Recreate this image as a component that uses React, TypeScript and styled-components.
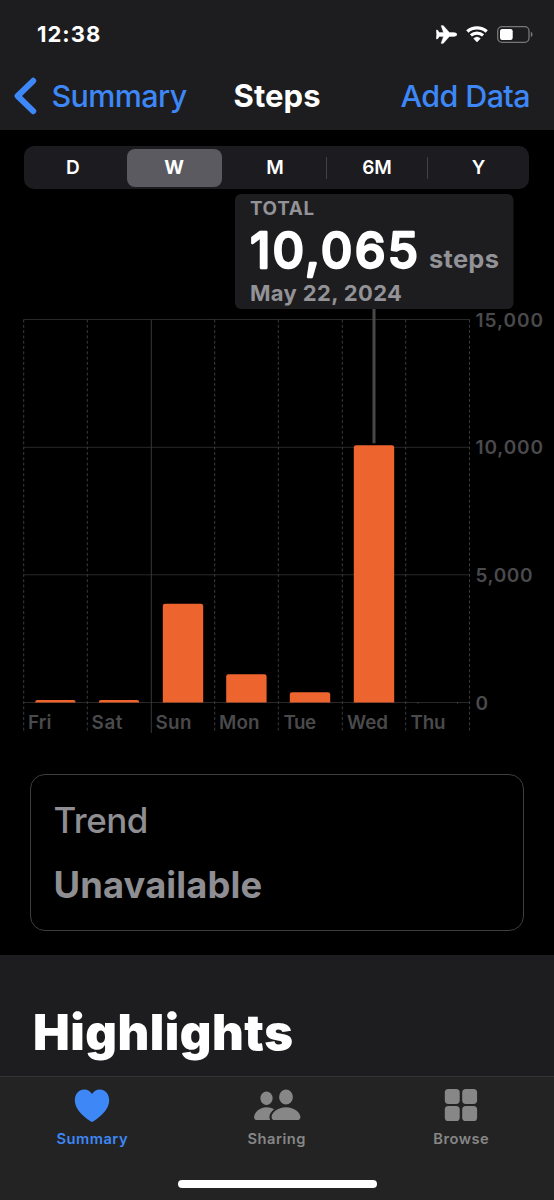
import React from "react";
import styled, { createGlobalStyle } from "styled-components";

const GlobalStyle = createGlobalStyle`
  * { box-sizing: border-box; }
  html, body { margin: 0; padding: 0; background: #000; }
  body { font-family: Inter, "Liberation Sans", sans-serif; color: #fff; }
`;

const BLUE = "#3e87f7";
const ORANGE = "#ee642f";
const GRID = "#29292b";
const AXIS_TEXT = "#4a4a4c";
const MUTED = "#8e8e93";

const Screen = styled.div`
  width: 554px;
  height: 1200px;
  display: flex;
  flex-direction: column;
  background: #000;
  overflow: hidden;
`;

const Header = styled.header`
  height: 130px;
  flex: none;
  background: #1d1d1f;
`;

const StatusBar = styled.div`
  height: 68px;
  padding: 0 21px 0 37px;
  display: flex;
  align-items: center;
  justify-content: space-between;
`;

const Clock = styled.span`
  font-size: 22px;
  font-weight: 700;
  letter-spacing: 1px;
`;

const StatusIcons = styled.div`
  display: flex;
  align-items: center;
  gap: 9px;
`;

const NavBar = styled.nav`
  height: 56px;
  padding: 0 24px 0 13px;
  display: flex;
  align-items: center;
  font-size: 30.5px;
  line-height: 56px;
`;

const BackButton = styled.button`
  flex: 0 0 220.5px;
  display: flex;
  align-items: center;
  gap: 13.5px;
  padding: 0;
  border: 0;
  background: none;
  font: inherit;
  font-weight: 500;
  color: ${BLUE};
  letter-spacing: -0.6px;
`;

const Title = styled.h1`
  flex: none;
  margin: 0;
  font-size: 31px;
  font-weight: 700;
  letter-spacing: 0.1px;
`;

const AddButton = styled(BackButton)`
  flex: none;
  margin-left: auto;
`;

const Segments = styled.div`
  height: 43px;
  flex: none;
  margin: 16px 25px 0 24px;
  padding-right: 1.8px;
  display: flex;
  justify-content: center;
  border-radius: 10px;
  background: #1c1c20;
`;

const Segment = styled.button<{ $selected?: boolean; $divided?: boolean }>`
  flex: 0 0 ${(p) => (p.$selected ? "95px" : p.$divided ? "101.6px" : "101.2px")};
  height: ${(p) => (p.$selected ? "38px" : "22px")};
  margin: ${(p) => (p.$selected ? "3px 3px 0" : "11px 0 0")};
  padding: 0;
  border: 0;
  border-left: ${(p) => (p.$divided ? "1px solid #424246" : "0")};
  border-radius: ${(p) => (p.$selected ? "8px" : "0")};
  background: ${(p) => (p.$selected ? "#5b5a60" : "none")};
  color: #fff;
  font: ${(p) => (p.$selected ? 700 : 600)} 19px/22px Inter, "Liberation Sans", sans-serif;
`;

const Chart = styled.svg`
  display: block;
  flex: none;
  width: 554px;
  height: 546px;
`;

const TrendCard = styled.section`
  height: 157px;
  flex: none;
  margin: 39px 30px 24px;
  padding: 23px 22.5px;
  border: 1.5px solid #3e3e41;
  border-radius: 15px;
  display: flex;
  flex-direction: column;
  gap: 21px;
  color: ${MUTED};
`;

const TrendLine = styled.span<{ $strong?: boolean }>`
  font-size: ${(p) => (p.$strong ? "36.3px" : "35px")};
  line-height: 44px;
  font-weight: ${(p) => (p.$strong ? 750 : 550)};
  letter-spacing: ${(p) => (p.$strong ? "0.15px" : "-0.5px")};
`;

const Highlights = styled.section`
  flex: 1;
  padding: 48px 33px 0;
  background: #1d1d1f;
`;

const HighlightsTitle = styled.h2`
  margin: 0;
  font-size: 49px;
  line-height: 60px;
  font-weight: 900;
  letter-spacing: 0.5px;
`;

const Footer = styled.footer`
  height: 124px;
  flex: none;
  display: flex;
  flex-direction: column;
  align-items: center;
  border-top: 1px solid #333335;
  background: #232323;
`;

const Tabs = styled.div`
  width: 100%;
  height: 103px;
  padding-right: 0.5px;
  display: grid;
  grid-template-columns: repeat(3, 1fr);
`;

const Tab = styled.button<{ $active?: boolean }>`
  display: flex;
  flex-direction: column;
  align-items: center;
  gap: 6px;
  padding: 10px 0 0;
  border: 0;
  background: none;
  color: ${(p) => (p.$active ? BLUE : "#878787")};
  font: 600 14.7px/20px Inter, "Liberation Sans", sans-serif;
  letter-spacing: 0.5px;
`;

const HomeIndicator = styled.div`
  width: 199px;
  height: 8px;
  border-radius: 4px;
  background: #fff;
`;

const ChevronIcon = () => (
  <svg width="25" height="38" viewBox="0 0 25 38" fill="none">
    <path d="M20.2 3.8 4.6 19l15.6 15.2" stroke="currentColor" strokeWidth="6" strokeLinecap="round" strokeLinejoin="round" />
  </svg>
);

const AirplaneIcon = () => (
  <svg width="21" height="19" viewBox="0 0 21 19" fill="#fff">
    <path d="M21 9.5c0-1.1-1.6-1.9-3.4-1.9h-4.2L7.6.9C7.3.5 7 .4 6.6.4h-.9c-.4 0-.6.3-.5.7l2.3 6.5H3.3L1.7 5.3C1.5 5 1.3 4.9 1 4.9H.7c-.3 0-.5.2-.5.5l.5 4.1-.5 4.1c0 .3.2.5.5.5H1c.3 0 .5-.1.7-.4l1.6-2.3h4.2l-2.3 6.500c-.1.4.1.7.5.7h.9c.4 0 .7-.1 1-.5l5.800-6.700h4.200c1.800 0 3.400-.8 3.400-1.900Z" stroke="#fff" strokeWidth="0.4" />
  </svg>
);

const WifiIcon = () => (
  <svg width="22" height="18" viewBox="0 0 22 18" fill="none" stroke="#fff">
    <path d="M1.3 6.5a14.6 14.6 0 0 1 19.4 0" strokeWidth="3.3" />
    <path d="M4.9 10.4a9.2 9.2 0 0 1 12.2 0" strokeWidth="3.1" />
    <path d="M11 16.9 7.7 13.6a4.9 4.9 0 0 1 6.6 0Z" fill="#fff" strokeWidth="0.6" strokeLinejoin="round" />
  </svg>
);

const BatteryIcon = () => (
  <svg width="36" height="17" viewBox="0 0 36 17">
    <rect x="0.7" y="0.7" width="31.3" height="15.6" rx="4.3" fill="none" stroke="#77777a" strokeWidth="1.3" />
    <rect x="3" y="3" width="12.7" height="11" rx="2.2" fill="#fff" />
    <path d="M33.8 5.8c1.1.5 1.7 1.5 1.7 2.7s-.6 2.2-1.7 2.7Z" fill="#77777a" />
  </svg>
);

const HeartIcon = () => (
  <svg width="48" height="36" viewBox="0 0 48 36" fill="currentColor">
    <path d="M24 34.8c-.5 0-1-.3-1.500-.6C13.300 28.500 6.800 21.200 6.800 13.300 6.800 7 11 2.500 16.300 2.500c3.400 0 6.100 1.800 7.700 4.600 1.600-2.800 4.300-4.600 7.700-4.600 5.300 0 9.500 4.500 9.500 10.800 0 7.900-6.500 15.200-15.700 20.900-.5.3-1 .6-1.500.6Z" />
  </svg>
);

const SharingIcon = () => (
  <svg width="48" height="36" viewBox="0 0 48 36" fill="currentColor">
    <ellipse cx="13.5" cy="11.3" rx="6.1" ry="6.7" />
    <ellipse cx="33" cy="10" rx="6.9" ry="7.5" />
    <path d="M33 20.2c8.4 0 14.4 5.4 14.4 9.8 0 1.9-1 3.1-3.3 3.1H21.9c-2.3 0-3.3-1.2-3.3-3.1 0-4.4 6-9.8 14.4-9.8Z" />
    <path d="M13.5 20.2c3.1 0 5.7.7 7.7 2-3 2.3-4.8 5.1-4.8 8 0 1.1.3 2.1.9 2.9H4.2c-2.2 0-3.1-1.2-3.1-2.9 0-4.8 5.4-10 12.4-10Z" />
  </svg>
);

const BrowseIcon = () => (
  <svg width="48" height="36" viewBox="0 0 48 36" fill="currentColor">
    <rect x="7.8" y="2" width="14.9" height="14.9" rx="3.6" />
    <rect x="25.2" y="2" width="14.9" height="14.9" rx="3.6" />
    <rect x="7.8" y="19.1" width="14.9" height="14.9" rx="3.6" />
    <rect x="25.2" y="19.1" width="14.9" height="14.9" rx="3.6" />
  </svg>
);

const BASE_Y = 513.5;
const COLUMN_X = [23.7, 87.3, 151.3, 214.7, 278.3, 342.3, 405.7, 469.5];

const days = [
  { name: "Fri", labelX: 28, labelW: 23.5, height: 2.5 },
  { name: "Sat", labelX: 91.5, labelW: 31, height: 2.5 },
  { name: "Sun", labelX: 155.5, labelW: 36, height: 98.7 },
  { name: "Mon", labelX: 219, labelW: 40.5, height: 28.2 },
  { name: "Tue", labelX: 283.5, labelW: 32.5, height: 10.3 },
  { name: "Wed", labelX: 347, labelW: 41, height: 257.2 },
  { name: "Thu", labelX: 410.5, labelW: 35, height: 0 },
];

const levels = [
  { label: "15,000", y: 130.5, width: 67.5 },
  { label: "10,000", y: 258.3, width: 67.5 },
  { label: "5,000", y: 385.8, width: 57 },
  { label: "0", y: 513.5, width: 12 },
];

const barPath = (x: number, h: number) => {
  const r = Math.min(2.2, h);
  return `M${x} ${BASE_Y}v${-(h - r)}q0 ${-r} ${r} ${-r}h${40.4 - 2 * r}q${r} 0 ${r} ${r}v${h - r}Z`;
};

const StepsChart = () => (
  <Chart viewBox="0 0 554 546" fontFamily='Inter, "Liberation Sans", sans-serif'>
    {levels.map((l) => (
      <React.Fragment key={l.label}>
        <path d={`M23.7 ${l.y}H469.5`} stroke={GRID} strokeWidth="1" />
        <text x={475.5} y={l.y + 7} fontSize="19" fontWeight="600" fill={AXIS_TEXT} textLength={l.width}>
          {l.label}
        </text>
      </React.Fragment>
    ))}
    {COLUMN_X.map((x, i) => (
      <path key={x} d={`M${x} 130.5V544`} stroke={i === 2 ? "#38383a" : "#3a3a3c"} strokeWidth="1" strokeDasharray={i === 2 ? undefined : "3 2.3"} />
    ))}
    {days.map((d, i) => (
      <React.Fragment key={d.name}>
        {d.height > 0 && <path d={barPath(COLUMN_X[i] + 11.5, d.height)} fill={ORANGE} />}
        <text x={d.labelX} y={539.5} fontSize="18.8" fontWeight="600" fill={AXIS_TEXT} textLength={d.labelW}>
          {d.name}
        </text>
      </React.Fragment>
    ))}
    <path d="M417.5 514h1M457 514h1" stroke="#7b4a35" />
    <path d="M374 119V254.3" stroke="#48484a" strokeWidth="3" />
    <rect x="235" y="5" width="278.5" height="115" rx="6" fill="#1d1d1f" />
    <g fill="#929297" fontWeight="700">
      <text x="250" y="26.3" fontSize="18.8" textLength="64">TOTAL</text>
      <text x="429" y="79" fontSize="25.5" textLength="70">steps</text>
      <text x="250" y="112.3" fontSize="22" textLength="152">May 22, 2024</text>
    </g>
    <text x="250" y="78.5" fontSize="49" fontWeight="500" fill="#fff" stroke="#fff" strokeWidth="2.3" strokeLinejoin="round" textLength="168">
      10,065
    </text>
  </Chart>
);

export default function App() {
  return (
    <Screen>
      <GlobalStyle />
      <Header>
        <StatusBar>
          <Clock>12:38</Clock>
          <StatusIcons>
            <AirplaneIcon />
            <WifiIcon />
            <BatteryIcon />
          </StatusIcons>
        </StatusBar>
        <NavBar>
          <BackButton>
            <ChevronIcon />
            Summary
          </BackButton>
          <Title>Steps</Title>
          <AddButton>Add Data</AddButton>
        </NavBar>
      </Header>
      <Segments>
        <Segment>D</Segment>
        <Segment $selected>W</Segment>
        <Segment>M</Segment>
        <Segment $divided>6M</Segment>
        <Segment $divided>Y</Segment>
      </Segments>
      <StepsChart />
      <TrendCard>
        <TrendLine>Trend</TrendLine>
        <TrendLine $strong>Unavailable</TrendLine>
      </TrendCard>
      <Highlights>
        <HighlightsTitle>Highlights</HighlightsTitle>
      </Highlights>
      <Footer>
        <Tabs>
          <Tab $active>
            <HeartIcon />
            Summary
          </Tab>
          <Tab>
            <SharingIcon />
            Sharing
          </Tab>
          <Tab>
            <BrowseIcon />
            Browse
          </Tab>
        </Tabs>
        <HomeIndicator />
      </Footer>
    </Screen>
  );
}
